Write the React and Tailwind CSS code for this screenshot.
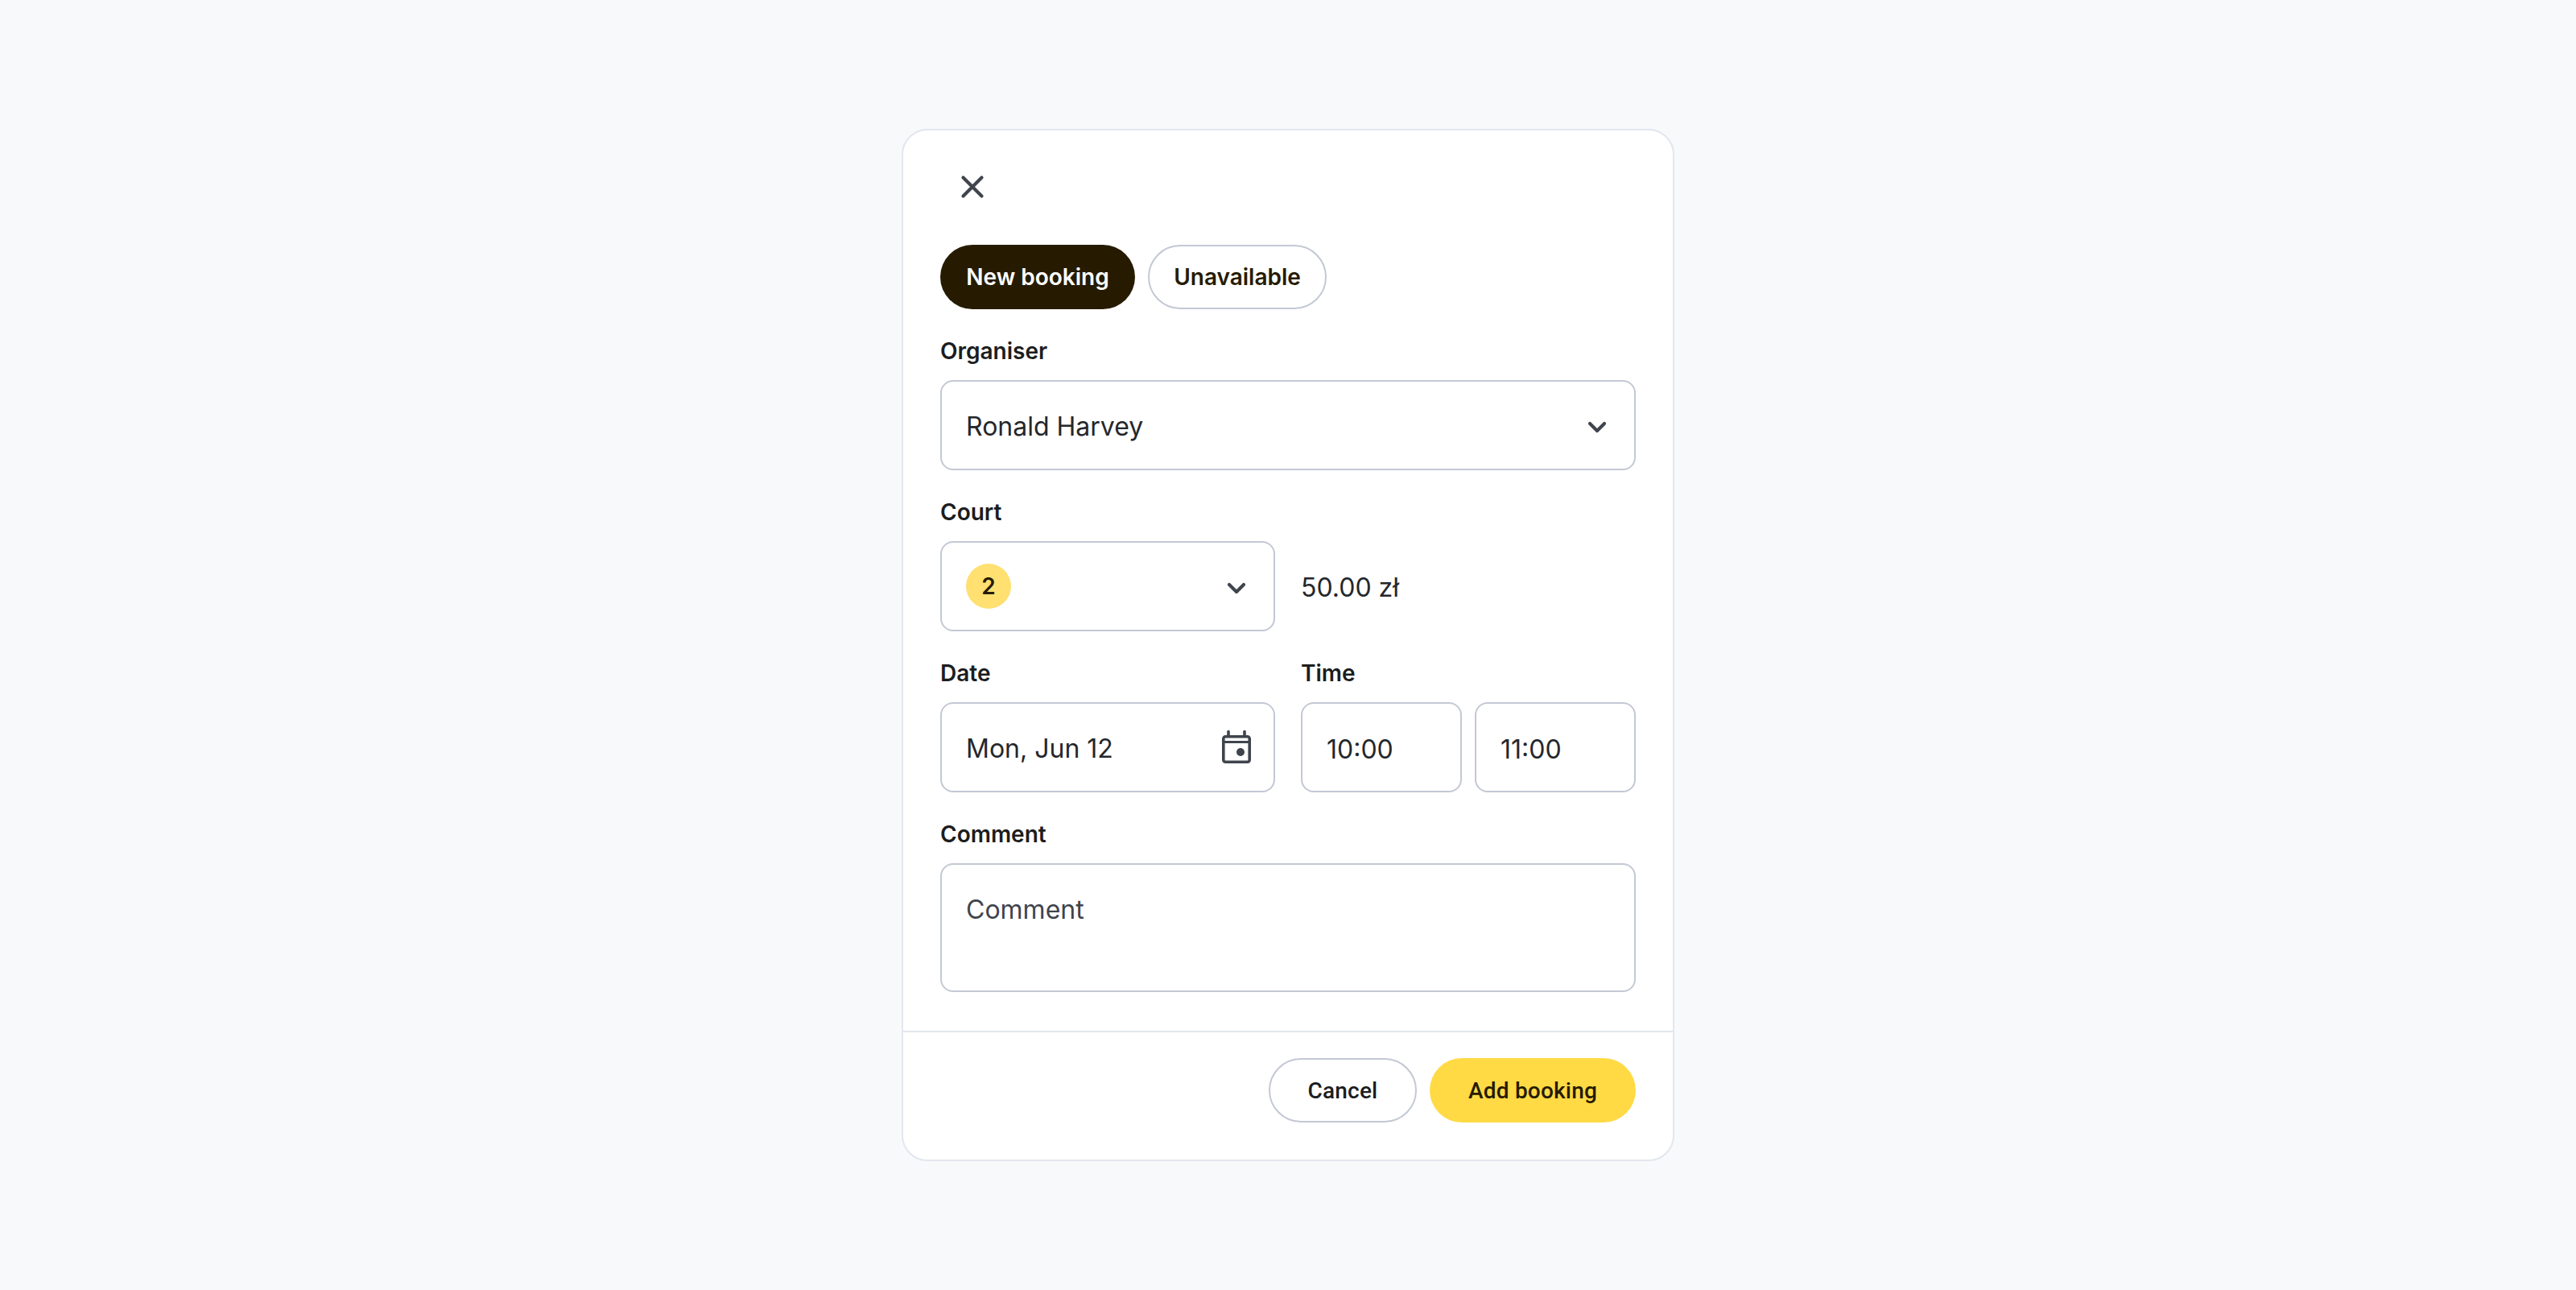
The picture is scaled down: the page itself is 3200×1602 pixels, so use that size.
import React from 'react';

const Label = ({ children }) => (
  <label className="block h-10 mb-4 text-[28px] leading-10 font-[560] text-[#1c1d20]">{children}</label>
);

const Chevron = () => (
  <svg width="48" height="48" viewBox="0 0 48 48" fill="none" className="text-[#3f444d]">
    <path d="M15 20L24 29L33 20" stroke="currentColor" strokeWidth="4.2" strokeLinecap="round" strokeLinejoin="round" />
  </svg>
);

const CalendarIcon = () => (
  <svg width="48" height="48" viewBox="0 0 48 48" fill="none" className="text-[#3f444d]">
    <rect x="7.8" y="10.8" width="32.4" height="31.4" rx="2.5" stroke="currentColor" strokeWidth="3.6" />
    <path d="M8 17.5H40" stroke="currentColor" strokeWidth="3" />
    <path d="M14 4.5V10M34 4.5V10" stroke="currentColor" strokeWidth="3.6" strokeLinecap="round" />
    <circle cx="29" cy="30" r="5" fill="currentColor" />
  </svg>
);

const fieldClass =
  'h-28 w-full rounded-2xl border-2 border-[#c3c8d4] bg-white px-[30px] pt-1 text-[32px] leading-[48px] font-normal text-[#25272b] outline-none';

const App = () => {
  return (
    <div className="flex min-h-screen items-center justify-center bg-[#f8f9fb] font-[Inter,sans-serif]">
      <div className="flex w-[960px] flex-col rounded-[32px] border-2 border-[#e2e6ee] bg-white">
        <div className="px-[46px] pt-[30px] pb-12">
          {/* Close */}
          <button className="mb-8 flex h-20 w-20 items-center justify-center text-[#3f444d]">
            <svg width="48" height="48" viewBox="0 0 48 48" fill="none">
              <path d="M12.5 12.5L35.5 35.5M35.5 12.5L12.5 35.5" stroke="currentColor" strokeWidth="4.2" strokeLinecap="round" />
            </svg>
          </button>

          {/* Mode tabs */}
          <div className="mb-8 flex gap-4">
            <button className="h-20 w-[242px] rounded-full bg-[#261b00] text-[28px] font-[560] text-white">New booking</button>
            <button className="h-20 w-[222px] rounded-full border-2 border-[#c3c8d4] bg-white text-[28px] font-[560] text-[#261b00]">Unavailable</button>
          </div>

          {/* Organiser */}
          <Label>Organiser</Label>
          <div className={`${fieldClass} mb-8 flex items-center justify-between pr-[22px]`}>
            <span>Ronald Harvey</span>
            <Chevron />
          </div>

          {/* Court */}
          <Label>Court</Label>
          <div className="mb-8 grid grid-cols-2 items-center gap-8">
            <div className={`${fieldClass} flex items-center justify-between pr-[22px]`}>
              <span className="-mt-1 flex h-14 w-14 items-center justify-center rounded-full bg-[#ffe070] text-[28px] font-semibold text-[#261b00]">2</span>
              <Chevron />
            </div>
            <span className="pt-1 text-[32px] leading-[48px] text-[#25272b]">50.00 zł</span>
          </div>

          {/* Date and time */}
          <div className="mb-8 grid grid-cols-2 gap-8">
            <div>
              <Label>Date</Label>
              <div className={`${fieldClass} flex items-center justify-between pr-[22px]`}>
                <span>Mon, Jun 12</span>
                <span className="-mt-1 flex"><CalendarIcon /></span>
              </div>
            </div>
            <div>
              <Label>Time</Label>
              <div className="grid grid-cols-2 gap-4">
                <input readOnly value="10:00" className={fieldClass} />
                <input readOnly value="11:00" className={fieldClass} />
              </div>
            </div>
          </div>

          {/* Comment */}
          <Label>Comment</Label>
          <textarea
            placeholder="Comment"
            className="block h-40 w-full resize-none rounded-2xl border-2 border-[#c3c8d4] bg-white px-[30px] pt-8 pb-7 text-[32px] leading-[48px] text-[#25272b] outline-none placeholder:text-[#3f444d]"
          />
        </div>

        {/* Footer */}
        <div className="flex justify-end gap-4 border-t-2 border-[#e2e6ee] px-[46px] pt-8 pb-[46px]">
          <button className="h-20 w-[184px] rounded-full border-2 border-[#c3c8d4] bg-white pt-0.5 font-[Roboto,sans-serif] text-[28px] font-medium tracking-[0.2px] text-[#1c1d20]">Cancel</button>
          <button className="h-20 w-64 rounded-full bg-[#ffda45] pt-0.5 font-[Roboto,sans-serif] text-[28px] font-medium tracking-[0.2px] text-[#261b00]">Add booking</button>
        </div>
      </div>
    </div>
  );
};

export default App;
